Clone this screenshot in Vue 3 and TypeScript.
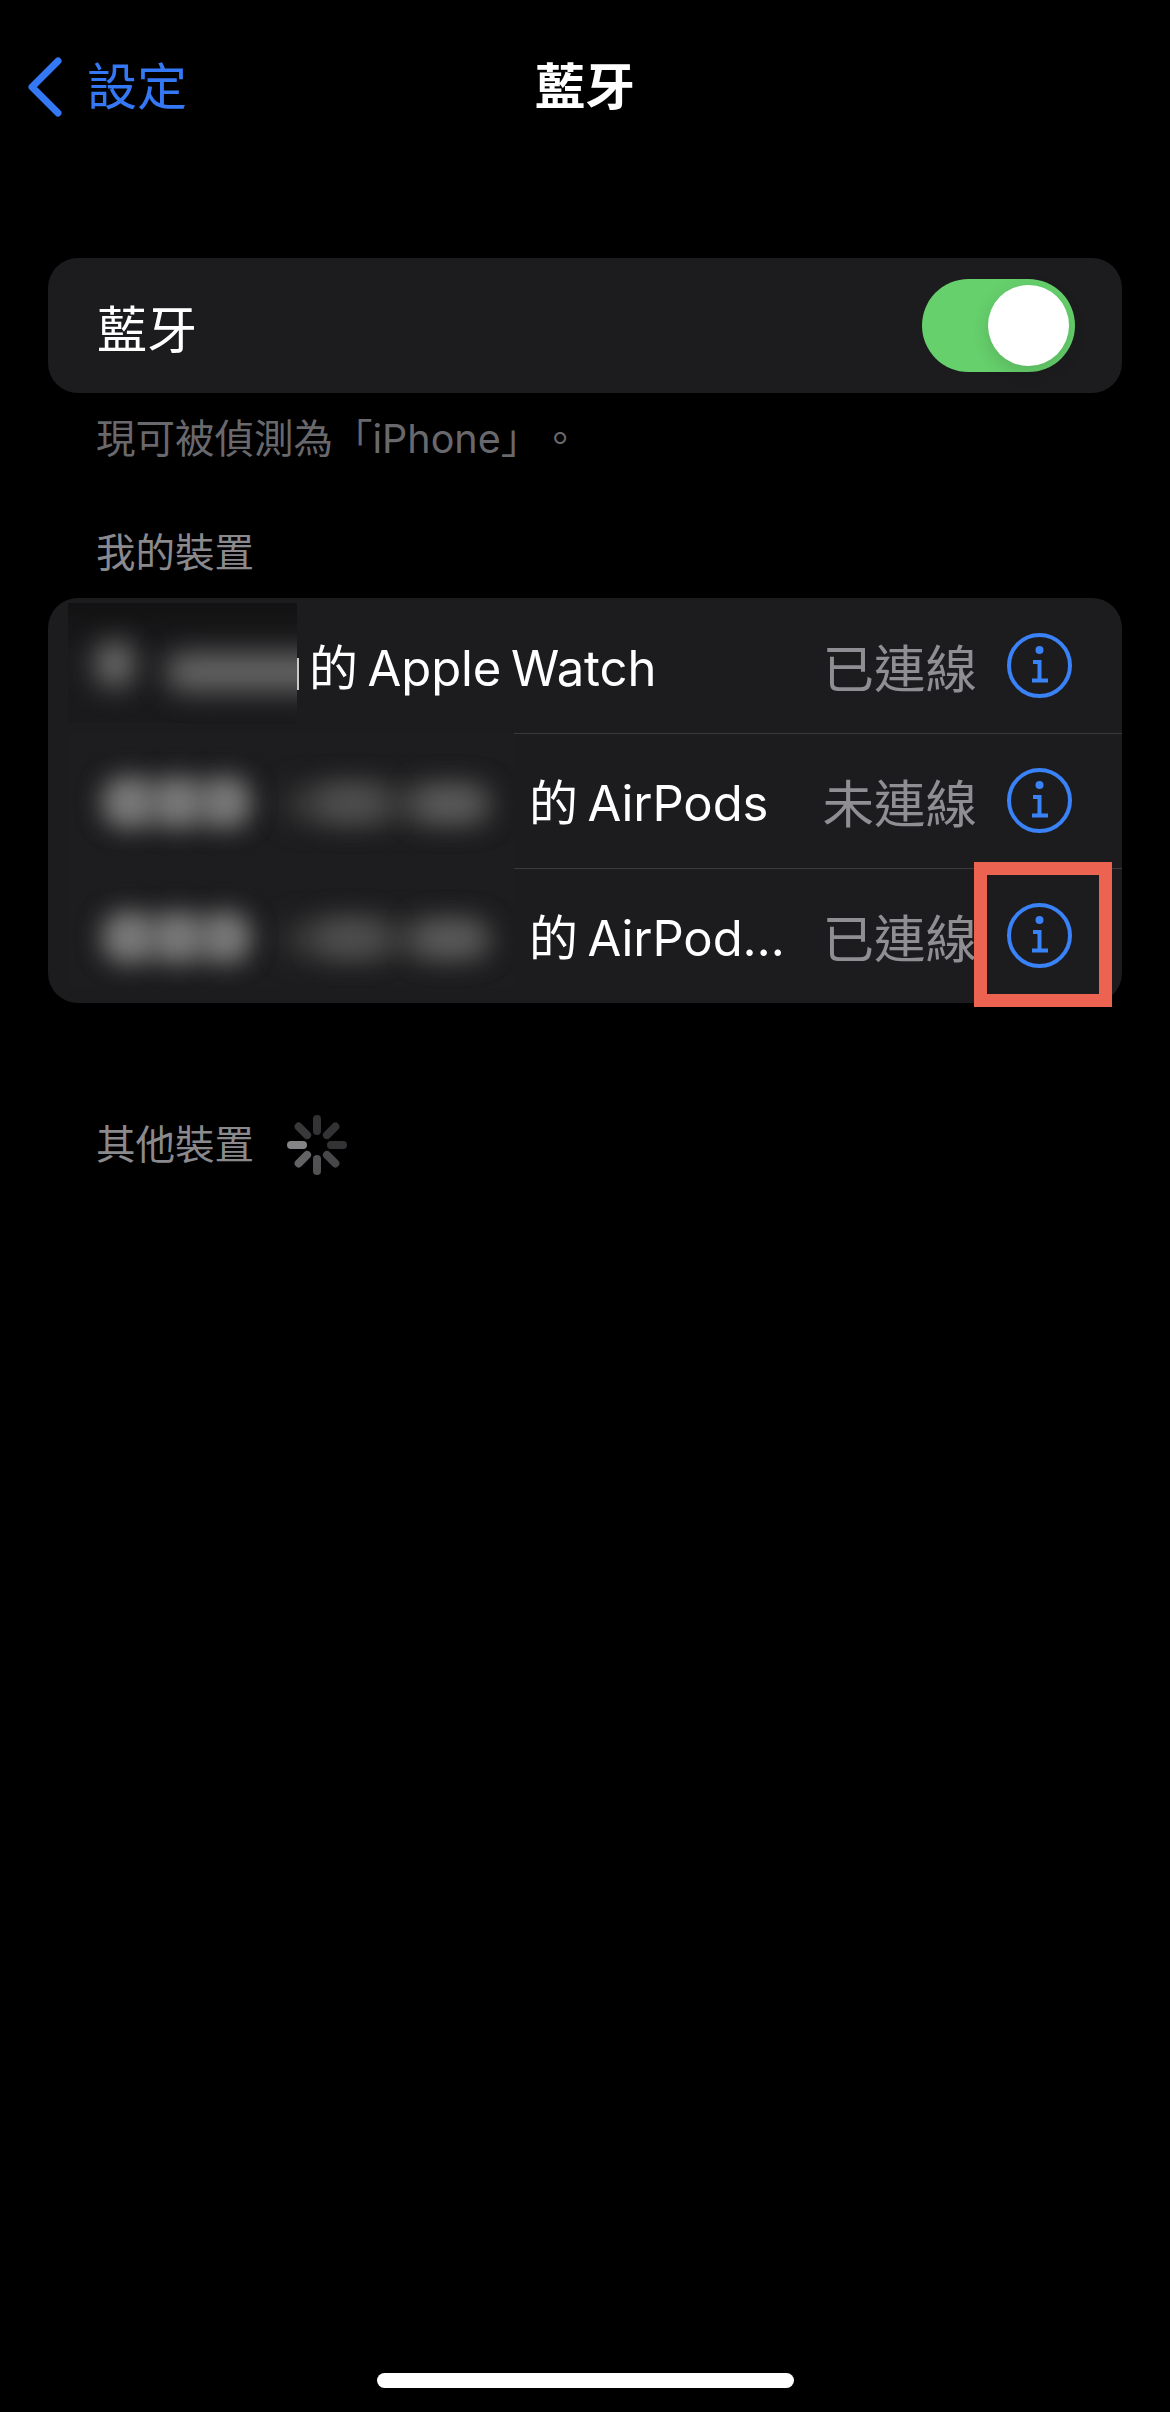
<script setup lang="ts">
interface Blob {
  x: number
  w: number
  y: number
  h: number
  tone: string
}

interface Device {
  name: string
  status: string
  nameLeft: number
  sepLeft: number
  patch: { x: number; y: number; w: number; h: number; tint: string }
  blobs: Blob[]
}

const airpodBlobs = (y: number): Blob[] => [
  { x: 36, w: 144, y: y + 2, h: 36, tone: '#5e5e5e' },
  { x: 40, w: 42, y: y - 4, h: 46, tone: '#808080' },
  { x: 90, w: 40, y: y - 4, h: 46, tone: '#808080' },
  { x: 138, w: 40, y: y - 4, h: 46, tone: '#808080' },
  { x: 216, w: 206, y: y + 4, h: 34, tone: '#3a3a3a' },
  { x: 248, w: 70, y: y + 2, h: 36, tone: '#505050' },
  { x: 346, w: 72, y: y + 4, h: 34, tone: '#5e5e5e' },
]

const devices: Device[] = [
  {
    name: '的 Apple Watch',
    status: '已連線',
    nameLeft: 261,
    sepLeft: 47,
    patch: { x: 20, y: 5, w: 229, h: 120, tint: 'linear-gradient(#121213, #1b1b1d 45%, #1a1a1c)' },
    blobs: [
      { x: 28, w: 38, y: 38, h: 46, tone: '#6e6e6e' },
      { x: 98, w: 170, y: 50, h: 38, tone: '#666' },
    ],
  },
  {
    name: '的 AirPods',
    status: '未連線',
    nameLeft: 481,
    sepLeft: 466,
    patch: { x: 20, y: 0, w: 446, h: 135, tint: '#1d1d1f' },
    blobs: airpodBlobs(50),
  },
  {
    name: '的 AirPod…',
    status: '已連線',
    nameLeft: 481,
    sepLeft: 466,
    patch: { x: 20, y: 0, w: 446, h: 120, tint: '#1d1d1f' },
    blobs: airpodBlobs(50),
  },
]

const spokes = [
  { angle: 0, tone: '#333335' },
  { angle: 45, tone: '#333335' },
  { angle: 90, tone: '#333335' },
  { angle: 135, tone: '#47474a' },
  { angle: 180, tone: '#525254' },
  { angle: 225, tone: '#636365' },
  { angle: 270, tone: '#858587' },
  { angle: 315, tone: '#39393b' },
]
</script>

<template>
  <div class="screen">
    <header class="nav">
      <div class="nav__back">
        <svg class="nav__chevron" viewBox="0 0 40 64" width="40" height="64">
          <path d="M32 6 L6 32 L32 58" fill="none" stroke="#3478f6" stroke-width="7" stroke-linecap="round" stroke-linejoin="round" />
        </svg>
        <span>設定</span>
      </div>
      <div class="nav__title">藍牙</div>
    </header>

    <main class="content">
      <section class="card card--toggle">
        <span class="card__label">藍牙</span>
        <span class="switch"><span class="switch__knob" /></span>
      </section>
      <p class="note">現可被偵測為「iPhone」。</p>

      <h2 class="section-label section-label--mine">我的裝置</h2>
      <section class="card card--list">
        <div
          v-for="(device, i) in devices"
          :key="i"
          class="row"
          :style="{ paddingLeft: device.nameLeft + 'px' }"
        >
          <span v-if="i > 0" class="row__sep" :style="{ left: device.sepLeft + 'px' }" />
          <div
            class="smudge"
            :style="{
              left: device.patch.x + 'px',
              top: device.patch.y + 'px',
              width: device.patch.w + 'px',
              height: device.patch.h + 'px',
              background: device.patch.tint,
            }"
          >
            <span
              v-for="(blob, j) in device.blobs"
              :key="j"
              class="smudge__blob"
              :style="{
                left: blob.x + 'px',
                top: blob.y + 'px',
                width: blob.w + 'px',
                height: blob.h + 'px',
                background: blob.tone,
              }"
            />
          </div>
          <span v-if="i === 0" class="row__sliver" />
          <span class="row__name">{{ device.name }}</span>
          <span class="row__status">{{ device.status }}</span>
          <svg class="row__info" viewBox="0 0 65 65" width="65" height="65">
            <circle cx="32.5" cy="32.5" r="30.5" fill="none" stroke="#3a82f7" stroke-width="4" />
            <circle cx="32.5" cy="17" r="4" fill="#3a82f7" />
            <path d="M26 29 H32.5 V47.5 M25 47.5 H41" fill="none" stroke="#3a82f7" stroke-width="4" />
          </svg>
        </div>
        <div class="callout" />
      </section>

      <div class="other">
        <h2 class="section-label">其他裝置</h2>
        <svg class="spinner" viewBox="0 0 60 60" width="60" height="60">
          <rect
            v-for="spoke in spokes"
            :key="spoke.angle"
            x="26"
            y="0"
            width="8"
            height="20"
            rx="4"
            :fill="spoke.tone"
            :transform="`rotate(${spoke.angle} 30 30)`"
          />
        </svg>
      </div>
    </main>

    <div class="home-bar" />
  </div>
</template>

<style scoped>
.screen {
  display: flex;
  flex-direction: column;
  height: 2412px;
  overflow: hidden;
  background: #000;
  color: #fff;
  font-family: "Inter", "Noto Sans CJK TC", sans-serif;
}

.nav {
  position: relative;
  display: flex;
  align-items: center;
  justify-content: center;
  height: 174px;
  flex-shrink: 0;
}

.nav__back {
  position: absolute;
  left: 26px;
  top: 55px;
  display: flex;
  align-items: center;
  gap: 21px;
  height: 64px;
  font-size: 50px;
  line-height: 58px;
  color: #3478f6;
}

.nav__chevron {
  display: block;
}

.nav__title {
  margin-top: -8px;
  font-size: 50px;
  font-weight: 600;
}

.content {
  display: flex;
  flex-direction: column;
  padding: 84px 48px 0;
}

.card {
  position: relative;
  background: #1c1c1e;
  border-radius: 30px;
}

.card--toggle {
  display: flex;
  align-items: center;
  justify-content: space-between;
  height: 135px;
  padding: 0 47px 0 49px;
}

.card__label {
  font-size: 50px;
}

.switch {
  position: relative;
  display: block;
  width: 153px;
  height: 93px;
  border-radius: 47px;
  background: #66d06c;
}

.switch__knob {
  position: absolute;
  right: 6px;
  top: 6px;
  width: 81px;
  height: 81px;
  border-radius: 50%;
  background: #fff;
  box-shadow: 0 6px 18px rgba(0, 0, 0, 0.14);
}

.note {
  margin: 22px 0 0;
  padding-left: 48px;
  font-size: 39.5px;
  line-height: 48px;
  color: #69696d;
  text-spacing-trim: space-all;
}

.section-label {
  margin: 0;
  padding-left: 48px;
  font-size: 39.5px;
  font-weight: 400;
  line-height: 48px;
  color: #8a8a8e;
}

.section-label--mine {
  margin-top: 66px;
}

.card--list {
  margin-top: 21px;
}

.row {
  position: relative;
  display: flex;
  align-items: center;
  height: 135px;
  padding-right: 50px;
  font-size: 49px;
  word-spacing: -4px;
  letter-spacing: -0.1px;
}

.row__sep {
  position: absolute;
  right: 0;
  top: 0;
  height: 1px;
  background: #3a3a3c;
}

.smudge {
  position: absolute;
  overflow: hidden;
}

.smudge__blob {
  position: absolute;
  border-radius: 18px;
  filter: blur(14px);
}

.row__sliver {
  position: absolute;
  left: 249px;
  top: 60px;
  width: 2px;
  height: 32px;
  background: #c8c8c8;
}

.row__name {
  flex: 1;
  min-width: 0;
  margin-top: -3px;
  white-space: nowrap;
}

.row__status {
  margin-right: 30px;
  font-size: 51.5px;
  font-weight: 400;
  letter-spacing: 0;
  color: #8e8e93;
}

.row__info {
  flex-shrink: 0;
}

.callout {
  position: absolute;
  right: 10px;
  top: 264px;
  box-sizing: border-box;
  width: 138px;
  height: 145px;
  border: 13px solid #ec6352;
}

.other {
  display: flex;
  align-items: center;
  gap: 33px;
  margin-top: 112px;
}

.home-bar {
  flex-shrink: 0;
  align-self: center;
  width: 417px;
  height: 15px;
  margin-top: auto;
  margin-bottom: 24px;
  border-radius: 8px;
  background: #fff;
}
</style>

<style>
html,
body {
  margin: 0;
  background: #000;
}
</style>
